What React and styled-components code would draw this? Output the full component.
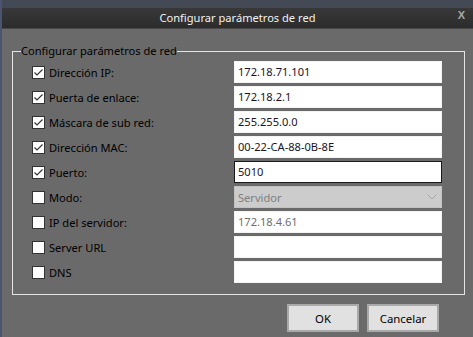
import React from "react";
import styled, { createGlobalStyle } from "styled-components";

const Global = createGlobalStyle`
  html, body { margin: 0; padding: 0; background: #6a6a6a; }
  * { box-sizing: border-box; }
`;

const Frame = styled.div`
  width: 473px;
  height: 337px;
  display: flex;
  flex-direction: column;
  background: #6a6a6a;
  border-left: 2px solid #4b5470;
  font-family: "Noto Sans", "Open Sans", sans-serif;
  font-size: 11.1px;
  overflow: hidden;
`;

const TopStrip = styled.div`
  height: 8px;
  background: #444956;
`;

const TitleBar = styled.div`
  height: 21px;
  display: flex;
  align-items: center;
  justify-content: center;
  position: relative;
  background: linear-gradient(#383838, #2c2c2c);
  border-bottom: 1px solid #4a4a4a;
  color: #f2f2f2;
  font-size: 11.1px;
  padding-bottom: 2px;
`;

const Close = styled.span`
  position: absolute;
  right: 8px;
  top: 1px;
  color: #a9a9a9;
  font-weight: bold;
  font-size: 11px;
  font-family: "Liberation Sans", sans-serif;
`;

const Body = styled.div`
  flex: 1;
  padding: 14px 8px 0 10px;
`;

const Group = styled.fieldset`
  margin: 0;
  padding: 2px 21px 11px 19px;
  border: 1px solid #e4e4e4;
  min-width: 0;
`;

const Legend = styled.legend`
  padding: 0;
  margin-left: -11px;
  line-height: 16px;
  color: #000;
  font-size: 11.1px;
`;

const Grid = styled.div`
  display: grid;
  grid-template-columns: 202px 208px;
  row-gap: 3px;
`;

const Label = styled.label`
  display: flex;
  align-items: center;
  gap: 4px;
  color: #000;
  height: 22px;
`;

const Box = styled.span`
  width: 13px;
  height: 13px;
  background: #fff;
  border: 1px solid #333;
  display: flex;
  align-items: center;
  justify-content: center;
`;

const Field = styled.div`
  height: 22px;
  background: #fff;
  border: 1px solid ${(p) => (p.$focus ? "#1a1a1a" : "#f4f4f4")};
  color: ${(p) => (p.$muted ? "#6e6e6e" : "#1a1226")};
  display: flex;
  align-items: center;
  padding-left: 3px;
  line-height: 1;
`;

const Select = styled.div`
  height: 22px;
  background: #cccccc;
  border: 1px solid #c2c2c2;
  color: #7f7f7f;
  display: flex;
  align-items: center;
  justify-content: space-between;
  padding: 0 4px 0 3px;
`;

const Footer = styled.div`
  display: flex;
  justify-content: flex-end;
  gap: 8px;
  padding: 9px 26px 0 0;
`;

const Button = styled.button`
  width: 72px;
  height: 28px;
  background: #e1e1e1;
  border: 2px solid #a9a9a9;
  font-family: "Noto Sans", "Open Sans", sans-serif;
  font-size: 11.4px;
  color: #000;
  padding: 0;
`;

const Check = ({ on }) => (
  <Box>
    {on && (
      <svg width="11" height="11" viewBox="0 0 11 11">
        <path d="M1.5 5.5 L4 8 L9.5 2.5" fill="none" stroke="#333" strokeWidth="1.2" />
      </svg>
    )}
  </Box>
);

const rows = [
  { label: "Dirección IP:", on: true, value: "172.18.71.101" },
  { label: "Puerta de enlace:", on: true, value: "172.18.2.1" },
  { label: "Máscara de sub red:", on: true, value: "255.255.0.0" },
  { label: "Dirección MAC:", on: true, value: "00-22-CA-88-0B-8E" },
  { label: "Puerto:", on: true, value: "5010", focus: true },
  { label: "Modo:", on: false, select: "Servidor" },
  { label: "IP del servidor:", on: false, value: "172.18.4.61", muted: true },
  { label: "Server URL", on: false, value: "" },
  { label: "DNS", on: false, value: "" },
];

export default function App() {
  return (
    <Frame>
      <Global />
      <TopStrip />
      <TitleBar>
        Configurar parámetros de red
        <Close>X</Close>
      </TitleBar>
      <Body>
        <Group>
          <Legend>Configurar parámetros de red</Legend>
          <Grid>
            {rows.map((r) => (
              <React.Fragment key={r.label}>
                <Label>
                  <Check on={r.on} />
                  {r.label}
                </Label>
                {r.select ? (
                  <Select>
                    {r.select}
                    <svg width="10" height="6" viewBox="0 0 10 6">
                      <path d="M0.5 0.5 L5 5 L9.5 0.5" fill="none" stroke="#a6a6a6" />
                    </svg>
                  </Select>
                ) : (
                  <Field $focus={r.focus} $muted={r.muted}>
                    {r.value}
                  </Field>
                )}
              </React.Fragment>
            ))}
          </Grid>
        </Group>
        <Footer>
          <Button>OK</Button>
          <Button>Cancelar</Button>
        </Footer>
      </Body>
    </Frame>
  );
}
